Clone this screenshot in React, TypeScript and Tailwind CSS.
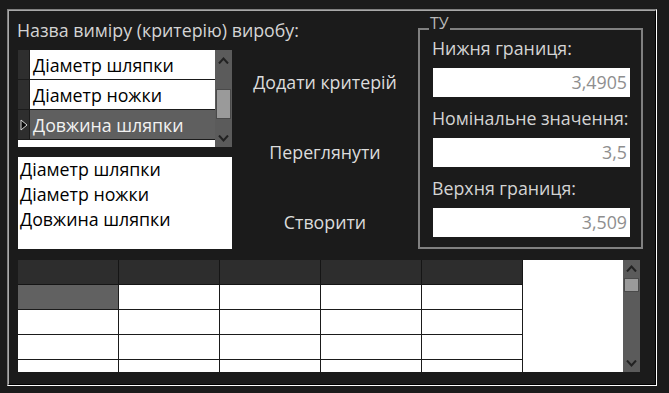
import React from "react";

const Chevron = ({ dir }: { dir: "up" | "down" }) => (
  <svg width="11" height="7" viewBox="0 0 11 7" className="shrink-0">
    <polyline
      points={dir === "up" ? "1,6.5 5.5,1.5 10,6.5" : "1,0.5 5.5,5.5 10,0.5"}
      fill="none"
      stroke="#222"
      strokeWidth="2"
    />
  </svg>
);

const VScroll = ({
  pt,
  thumbTop,
  thumbH,
  pb,
}: {
  pt: string;
  thumbTop: string;
  thumbH: string;
  pb: string;
}) => (
  <div className={`w-[17px] h-full shrink-0 bg-[#5b5b5b] flex flex-col items-center ${pt} ${pb}`}>
    <Chevron dir="up" />
    <div className={`w-[15px] ${thumbTop} ${thumbH} bg-[#9a9a9a] border border-[#4a4a4a]`} />
    <div className="flex-1" />
    <Chevron dir="down" />
  </div>
);

const items = ["Діаметр шляпки", "Діаметр ножки", "Довжина шляпки"];

export default function App() {
  return (
    <div className="w-[669px] h-[393px] bg-[#1b1b1b] pt-[9px] pl-[7px] font-['Open_Sans',sans-serif] text-[17.8px] overflow-hidden">
      <div className="w-[650px] h-[377px] border border-t-[#7f7f7f] border-l-[#7f7f7f] border-r-white border-b-white">
        <div className="h-full border border-t-[#a9a9a9] border-l-[#a9a9a9] border-r-black border-b-black pl-[9px] flex flex-col overflow-hidden">
          {/* top row */}
          <div className="flex h-[239px] shrink-0">
            {/* left column */}
            <div className="w-[214px] flex flex-col shrink-0">
              <div className="h-[39px] pt-[9px] -ml-[1px] leading-[20px] text-[#d4d4d4] whitespace-nowrap">
                Назва виміру (критерію) виробу:
              </div>
              <div className="h-[97px] bg-white flex overflow-hidden">
                <div className="flex-1 flex flex-col">
                  {items.map((t, i) => (
                    <div key={t} className="h-[30px] shrink-0 flex border-b border-[#1b1b1b]">
                      <div className="w-[12px] bg-[#2e2e2e] border-r border-[#1b1b1b] flex items-center justify-center">
                        {i === 2 && (
                          <svg width="8" height="12" viewBox="0 0 8 12">
                            <polygon points="1,1 7,6 1,11" fill="#050505" stroke="#d8d8d8" strokeWidth="1" />
                          </svg>
                        )}
                      </div>
                      <div
                        className={`flex-1 pl-[3px] leading-[31px] whitespace-nowrap overflow-hidden ${
                          i === 2 ? "bg-[#5f5f5f] text-[#f2f2f2]" : "bg-white text-black"
                        }`}
                      >
                        {t}
                      </div>
                    </div>
                  ))}
                </div>
                <VScroll pt="pt-[7px]" thumbTop="mt-[25px]" thumbH="h-[30px]" pb="pb-[5px]" />
              </div>
              <div className="mt-[10px] h-[92px] bg-white pl-[2px] text-black leading-[25px]">
                {items.map((t) => (
                  <div key={t} className="whitespace-nowrap">
                    {t}
                  </div>
                ))}
              </div>
            </div>
            {/* middle buttons */}
            <div className="w-[186px] shrink-0 flex flex-col items-center pt-[56px] gap-[40px] text-[#dcdcdc]">
              {["Додати критерій", "Переглянути", "Створити"].map((t) => (
                <div key={t} className="h-[30px] leading-[30px] whitespace-nowrap">
                  {t}
                </div>
              ))}
            </div>
            {/* group box */}
            <div className="mt-[17px] w-[225px] h-[221px] shrink-0 border-2 border-[#808080] relative flex flex-col">
              <div className="absolute -top-[16px] left-[9px] px-[1px] bg-[#1b1b1b] text-[16px] leading-[18px] text-[#b8b8b8]">
                ТУ
              </div>
              {[
                ["Нижня границя:", "3,4905"],
                ["Номінальне значення:", "3,5"],
                ["Верхня границя:", "3,509"],
              ].map(([l, v], i) => (
                <div key={l} className={`flex flex-col ${i > 0 ? "mt-[3px]" : ""}`}>
                  <div className="h-[38px] pt-[8px] pl-[12px] leading-[20px] text-[#d4d4d4] whitespace-nowrap">
                    {l}
                  </div>
                  <div className="ml-[13px] w-[197px] h-[29px] bg-white text-right pr-[3px] leading-[29px] text-[#8e8e8e]">
                    {v}
                  </div>
                </div>
              ))}
            </div>
          </div>
          {/* bottom grid */}
          <div className="mt-[10px] w-[622px] h-[112px] shrink-0 flex bg-white overflow-hidden">
            <div className="flex flex-col">
              <div className="flex h-[25px] shrink-0">
                {[0, 1, 2, 3, 4].map((c) => (
                  <div key={c} className="w-[101px] h-[25px] bg-[#2d2d2d] border-r border-b border-[#151515]" />
                ))}
              </div>
              {[0, 1, 2, 3].map((r) => (
                <div key={r} className="flex h-[25px] shrink-0">
                  {[0, 1, 2, 3, 4].map((c) => (
                    <div
                      key={c}
                      className={`w-[101px] h-[25px] border-r border-b border-[#1b1b1b] ${
                        r === 0 && c === 0 ? "bg-[#616161]" : "bg-white"
                      }`}
                    />
                  ))}
                </div>
              ))}
            </div>
            <div className="flex-1 bg-white" />
            <VScroll pt="pt-[5px]" thumbTop="mt-[6px]" thumbH="h-[14px]" pb="pb-[5px]" />
          </div>
        </div>
      </div>
    </div>
  );
}
